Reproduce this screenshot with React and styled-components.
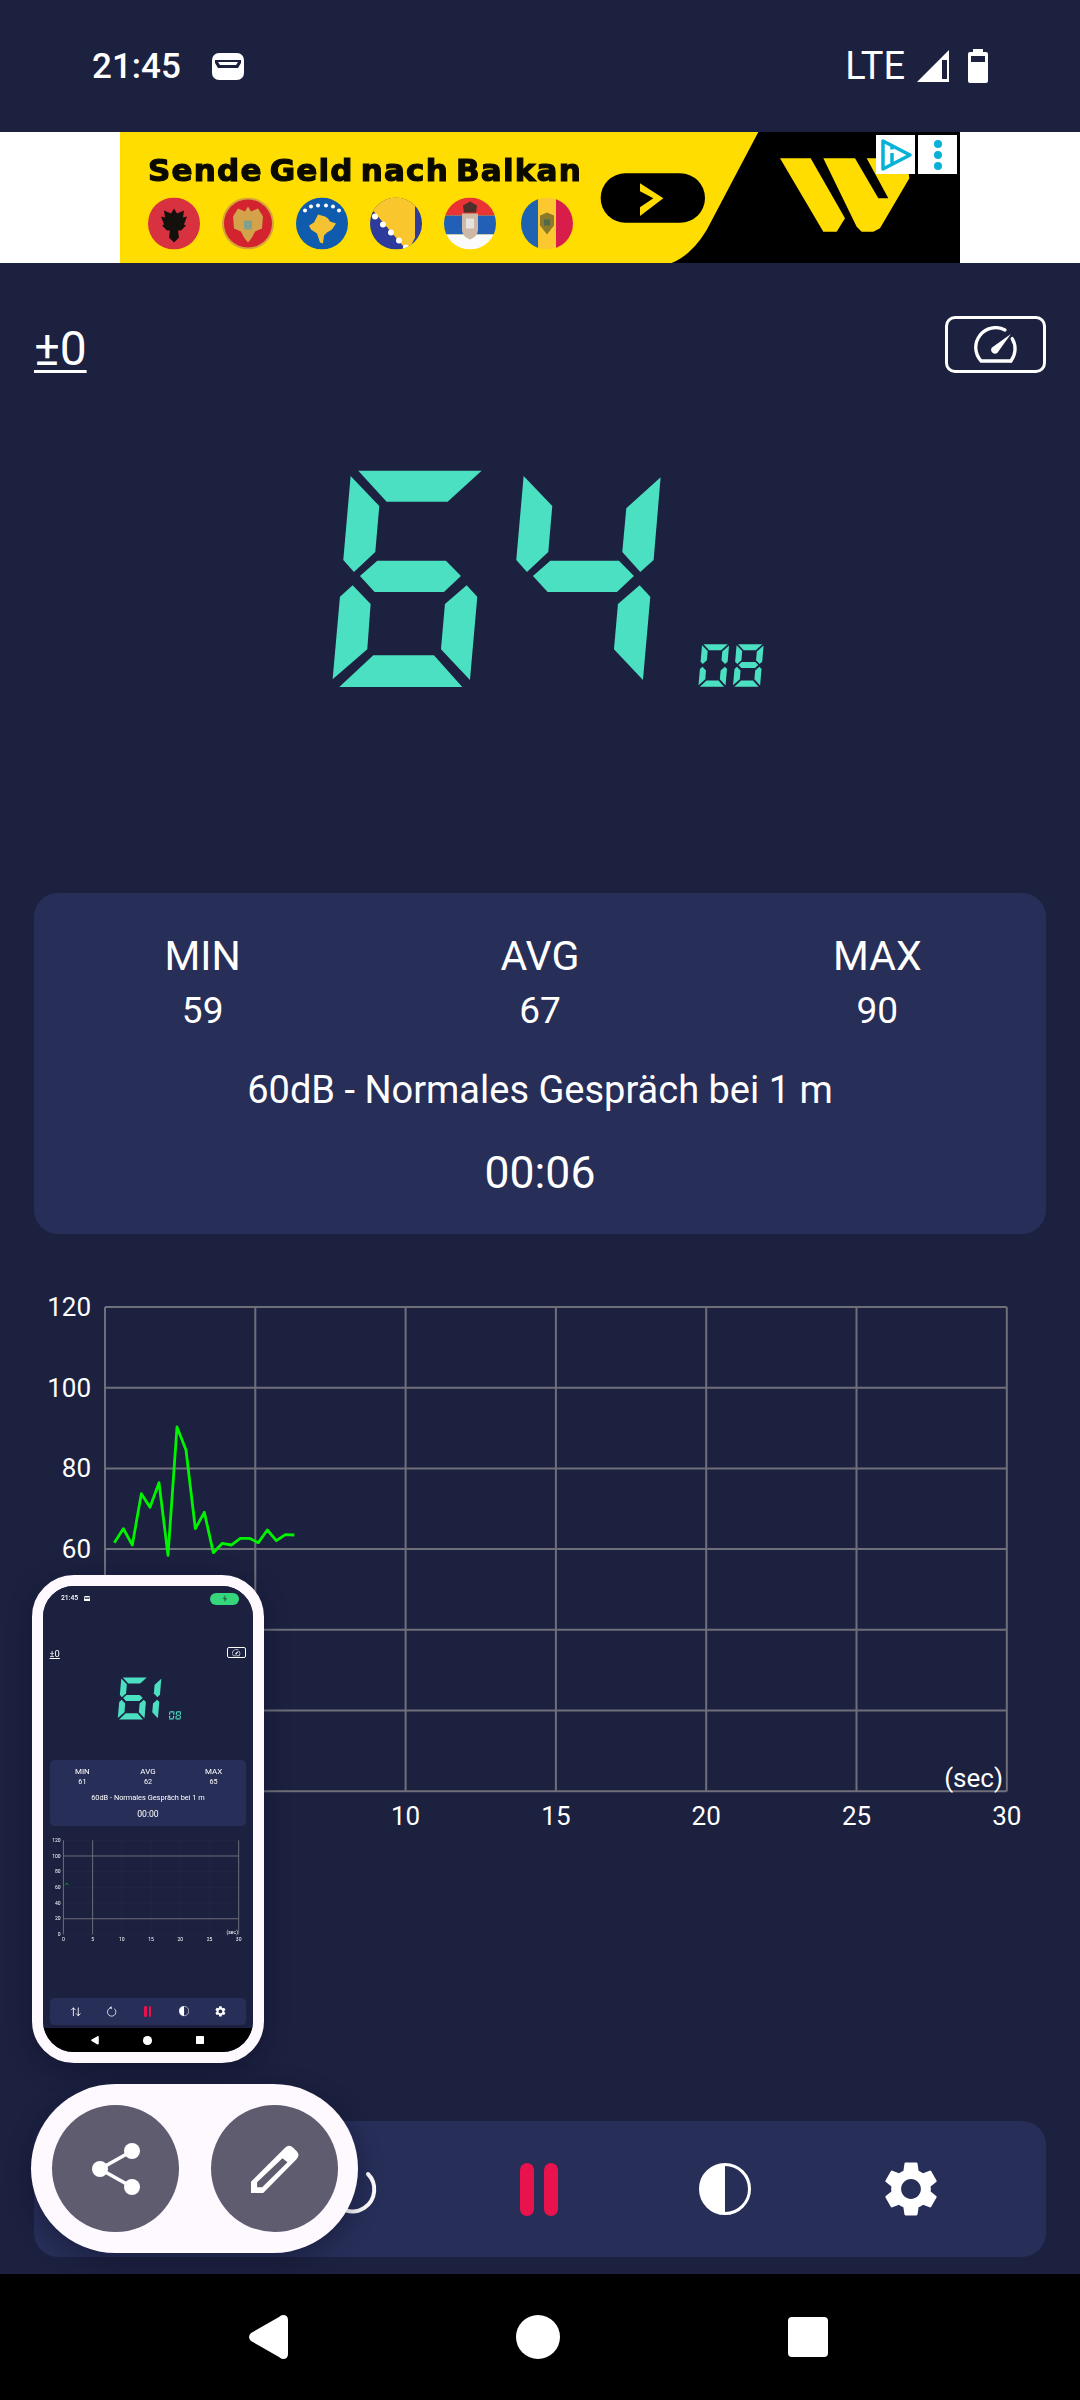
import React from 'react';
import styled, { createGlobalStyle } from 'styled-components';
import { ArrowUpDown } from 'lucide-react';
import { MdSettings } from 'react-icons/md';

const GlobalStyle = createGlobalStyle`
  html, body {
    margin: 0;
    padding: 0;
    background: #1c2140;
  }
  body {
    font-family: Roboto, "Liberation Sans", sans-serif;
    color: #fff;
  }
`;

const Page = styled.div`
  position: relative;
  width: 1080px;
  height: 2400px;
  overflow: hidden;
`;

const Screen = styled.div`
  display: flex;
  flex-direction: column;
  width: 1080px;
  height: 2400px;
  background: #1c2140;
  ${(p) => p.$mini && 'zoom: 0.1944;'}
`;

/* status bar */
const StatusBar = styled.div`
  display: flex;
  align-items: center;
  justify-content: space-between;
  flex: none;
  height: 132px;
  box-sizing: border-box;
  padding: 0 92px;
`;

const StatusGroup = styled.div`
  display: flex;
  align-items: center;
  gap: ${(p) => p.$gap}px;
`;

const Clock = styled.span`
  font-size: 35px;
  font-weight: 500;
  line-height: 1;
`;

const Carrier = styled.span`
  font-size: 38px;
  line-height: 1;
`;

const RecordingPill = styled.div`
  display: flex;
  align-items: center;
  justify-content: center;
  width: 148px;
  height: 62px;
  margin-right: -20px;
  border-radius: 31px;
  background: #35d67c;
`;

/* banner */
const AdSlot = styled.div`
  display: flex;
  justify-content: center;
  flex: none;
  height: 131px;
  background: ${(p) => (p.$empty ? 'transparent' : '#fff')};
`;

const AdBanner = styled.div`
  position: relative;
  display: flex;
  flex-direction: column;
  gap: 11px;
  width: 840px;
  box-sizing: border-box;
  padding: 22px 0 0 28px;
  background: #ffdd00;
  overflow: hidden;
`;

const AdArt = styled.svg`
  position: absolute;
  inset: 0;
  width: 840px;
  height: 131px;
  filter: blur(0.5px);
`;

const AdTitle = styled.div`
  font-family: "DejaVu Sans", sans-serif;
  font-size: 31px;
  font-weight: 700;
  line-height: 32px;
  letter-spacing: 1.2px;
  word-spacing: -5px;
  color: #0b0a00;
  -webkit-text-stroke: 1.2px #0b0a00;
  white-space: nowrap;
  filter: blur(0.6px);
`;

const FlagRow = styled.div`
  display: flex;
  gap: 22px;
  filter: blur(0.5px);

  & > :last-child {
    margin-left: 3px;
  }
`;

const AdChoices = styled.div`
  position: absolute;
  top: 3px;
  right: 3px;
  display: flex;
  gap: 3px;
`;

const AdChoiceBox = styled.div`
  display: flex;
  align-items: center;
  justify-content: center;
  width: 39px;
  height: 39px;
  background: #fff;
`;

/* top controls */
const TopRow = styled.div`
  display: flex;
  justify-content: space-between;
  align-items: flex-start;
  flex: none;
  margin: 53px 34px 0 34px;
`;

const Offset = styled.span`
  margin-top: 9px;
  font-size: 48px;
  line-height: 1;
  text-decoration: underline;
  text-decoration-thickness: 3px;
  text-underline-offset: 5px;
`;

const GaugeButton = styled.div`
  display: flex;
  align-items: center;
  justify-content: center;
  width: 101px;
  height: 57px;
  box-sizing: border-box;
  border: 3px solid #fff;
  border-radius: 10px;
`;

/* seven segment read-out */
const Meter = styled.div`
  display: flex;
  align-items: flex-end;
  justify-content: center;
  flex: none;
  height: 218px;
  margin-top: 97px;
  padding-left: 14px;
`;

const DigitRow = styled.div`
  display: flex;
  gap: ${(p) => p.$gap}px;
`;

const UnitRow = styled(DigitRow)`
  margin-left: 35px;
  margin-bottom: 1px;
`;

const Digit = styled.div`
  display: grid;
  width: ${(p) => (p.$h * 160) / 218}px;
  height: ${(p) => p.$h}px;
  ${(p) => p.$narrow && `margin-left: ${(-p.$h * 104) / 218}px;`}
`;

const Segment = styled.div`
  grid-area: 1 / 1;
  background: #4be0c1;
  clip-path: ${(p) => p.$shape};
`;

/* min / avg / max card */
const StatsCard = styled.div`
  flex: none;
  margin: 205px 34px 0 34px;
  height: 341px;
  box-sizing: border-box;
  padding-top: 40px;
  border-radius: 24px;
  background: #272e58;
  text-align: center;
`;

const StatsGrid = styled.div`
  display: grid;
  grid-template-columns: repeat(3, 1fr);
`;

const StatLabel = styled.div`
  font-size: 41px;
  line-height: 47px;
`;

const StatValue = styled.div`
  margin-top: 10px;
  font-size: 37px;
  line-height: 42px;
`;

const LevelHint = styled.div`
  margin-top: 37px;
  font-size: 38px;
  line-height: 42px;
`;

const Timer = styled.div`
  margin-top: 36px;
  font-size: 44.5px;
  line-height: 52px;
`;

/* chart */
const ChartSvg = styled.svg`
  display: block;
  flex: none;
  width: 1080px;
  height: 550px;
  margin-top: 56px;
`;

const AxisText = styled.text`
  font-family: Roboto, "Liberation Sans", sans-serif;
  font-size: 26px;
  fill: #fff;
`;

/* bottom toolbar */
const Toolbar = styled.div`
  display: flex;
  justify-content: center;
  align-items: center;
  flex: none;
  height: 136px;
  margin: auto 34px 17px 34px;
  padding-right: 3px;
  border-radius: 24px;
  background: #272e58;
`;

const ToolButton = styled.div`
  display: flex;
  align-items: center;
  justify-content: center;
  width: 186px;
  height: 80px;
`;

const PauseIcon = styled.div`
  display: flex;
  gap: 10px;
`;

const PauseBar = styled.div`
  width: 14px;
  height: 53px;
  border-radius: 7px;
  background: #e8134c;
`;

/* android navigation */
const NavBar = styled.div`
  display: flex;
  align-items: center;
  justify-content: center;
  gap: 228px;
  flex: none;
  height: 126px;
  background: #000;
  padding-right: 4px;
`;

const NavCircle = styled.div`
  width: 44px;
  height: 44px;
  border-radius: 50%;
  background: #fff;
`;

const NavSquare = styled.div`
  width: 40px;
  height: 40px;
  border-radius: 4px;
  background: #fff;
`;

/* floating recorder thumbnail + actions */
const Thumbnail = styled.div`
  position: absolute;
  left: 32px;
  top: 1575px;
  width: 210px;
  height: 466px;
  border: 11px solid #fef8ff;
  border-radius: 42px;
  overflow: hidden;
  box-shadow: 0 6px 24px rgba(8, 10, 30, 0.4);
`;

const ThumbnailInner = styled.div`
  filter: blur(0.35px);
`;

const ActionPill = styled.div`
  position: absolute;
  left: 31px;
  top: 2084px;
  display: flex;
  align-items: center;
  gap: 32px;
  width: 327px;
  height: 169px;
  box-sizing: border-box;
  padding-left: 21px;
  border-radius: 85px;
  background: #fef8ff;
  box-shadow: 0 6px 24px rgba(8, 10, 30, 0.4);
`;

const ActionButton = styled.div`
  display: flex;
  align-items: center;
  justify-content: center;
  width: 127px;
  height: 127px;
  border-radius: 50%;
  background: #5f5c70;
`;

// outlines of the seven segments, in a 480 x 654 cell
const SEGMENTS = {
  a: [[85, 2], [455, 2], [353, 95], [170, 95]],
  b: [[473, 22], [452, 270], [412, 306], [358, 246], [370, 115]],
  c: [[410, 346], [442, 380], [420, 630], [333, 538], [345, 402]],
  d: [[130, 556], [312, 556], [397, 651], [28, 651]],
  e: [[68, 346], [122, 402], [112, 538], [8, 628], [30, 380]],
  f: [[62, 18], [148, 108], [136, 246], [72, 306], [40, 270]],
  g: [[90, 318], [142, 272], [348, 272], [393, 318], [342, 366], [134, 366]],
};

const GLYPHS = {
  0: 'abcdef',
  1: 'bc',
  4: 'bcfg',
  6: 'acdefg',
  D: 'abcdef',
  B: 'abcdefg',
};

const shapeOf = (name) =>
  `polygon(${SEGMENTS[name]
    .map(([x, y]) => `${(x / 480) * 100}% ${(y / 654) * 100}%`)
    .join(', ')})`;

const SevenSegment = ({ value, height, gap }) => (
  <DigitRow $gap={gap} aria-label={value}>
    {value.split('').map((ch, i) => (
      <Digit key={i} $h={height} $narrow={ch === '1'}>
        {GLYPHS[ch].split('').map((s) => (
          <Segment key={s} $shape={shapeOf(s)} />
        ))}
      </Digit>
    ))}
  </DigitRow>
);

const Unit = ({ height, gap }) => (
  <UnitRow $gap={gap} aria-label="dB">
    {['D', 'B'].map((ch) => (
      <Digit key={ch} $h={height}>
        {GLYPHS[ch].split('').map((s) => (
          <Segment key={s} $shape={shapeOf(s)} />
        ))}
      </Digit>
    ))}
  </UnitRow>
);

const FlagSvg = ({ id, children }) => (
  <svg width="52" height="53" viewBox="0 0 52 52">
    <clipPath id={id}>
      <circle cx="26" cy="26" r="26" />
    </clipPath>
    <g clipPath={`url(#${id})`}>{children}</g>
  </svg>
);

const Flags = () => (
  <FlagRow>
    <FlagSvg id="fl-al">
      <rect width="52" height="52" fill="#d8313f" />
      <path d="M26 11l3 5 7-3-1 7 4-1-3 8 2 1-5 5-3 0 1 7-5 5-5-5 1-7-3 0-5-5 2-1-3-8 4 1-1-7 7 3z" fill="#14100c" />
    </FlagSvg>
    <FlagSvg id="fl-me">
      <rect width="52" height="52" fill="#d8a33a" />
      <circle cx="26" cy="26" r="24" fill="#d3232f" />
      <path d="M26 9l3 5 7-3 5 8-1 12-7 3-3 6-4 5-4-5-3-6-7-3-1-12 5-8 7 3z" fill="#d4a24a" />
      <rect x="22" y="23" width="8" height="9" rx="2" fill="#7ea28e" />
    </FlagSvg>
    <FlagSvg id="fl-xk">
      <rect width="52" height="52" fill="#0f5cae" />
      <path d="M22 17l7 2 3 2 2 3 6 2-4 6-5 3-3 3-1 8-3-1-3-9-6-4-2-4 5-3z" fill="#f4c233" />
      <g fill="#fff">
        <circle cx="9" cy="13" r="2" />
        <circle cx="15" cy="9" r="2" />
        <circle cx="22" cy="8" r="2" />
        <circle cx="30" cy="8" r="2" />
        <circle cx="37" cy="9" r="2" />
        <circle cx="43" cy="13" r="2" />
      </g>
    </FlagSvg>
    <FlagSvg id="fl-ba">
      <rect width="52" height="52" fill="#2c3b9c" />
      <path d="M6 0H45V40L39 52H36L2 12z" fill="#fac62e" />
      <g fill="#fff">
        <circle cx="5" cy="19" r="3" />
        <circle cx="13" cy="27" r="3" />
        <circle cx="21" cy="35" r="3" />
        <circle cx="29" cy="43" r="3" />
        <circle cx="36" cy="50" r="3" />
      </g>
    </FlagSvg>
    <FlagSvg id="fl-rs">
      <rect width="52" height="18" fill="#ea3335" />
      <rect y="18" width="52" height="19" fill="#2260b8" />
      <rect y="37" width="52" height="15" fill="#fbfbfb" />
      <path d="M19 8l7-4 7 4-1 7H20z" fill="#4a3028" />
      <path d="M18 16h16v16c0 6-5 9-8 10-3-1-8-4-8-10z" fill="#cdb9a6" />
      <rect x="22" y="21" width="8" height="10" fill="#e6e2e0" />
    </FlagSvg>
    <FlagSvg id="fl-md">
      <rect width="17" height="52" fill="#1d63b2" />
      <rect x="17" width="18" height="52" fill="#fbc92f" />
      <rect x="35" width="17" height="52" fill="#d91d4a" />
      <path d="M19 18l7-3 7 3v10l-7 9-7-9z" fill="#8c7a2c" />
      <rect x="23" y="22" width="6" height="6" fill="#4f6a4a" />
    </FlagSvg>
  </FlagRow>
);

const AdArtwork = () => (
  <AdArt viewBox="-1320 36 2520 393" preserveAspectRatio="none">
    <path d="M595 36L440 330Q395 405 335 429H1200V36Z" fill="#000" />
    <rect x="122" y="160" width="313" height="148" rx="74" fill="#000" />
    <polygon points="240,190 310,235 240,288 240,262 280,235 240,214" fill="#ffdd00" />
    <polygon points="660,115 752,115 855,295 830,335 790,335" fill="#ffdd00" />
    <polygon
      points="790,115 885,115 955,235 985,235 920,115 1040,115 1048,175 960,325 940,335 905,335 890,320"
      fill="#ffdd00"
    />
  </AdArt>
);

const StatusIcons = () => (
  <StatusGroup $gap={12}>
    <Carrier>LTE</Carrier>
    <svg width="32" height="32" viewBox="0 0 32 32">
      <path fillRule="evenodd" d="M0 32L32 0V32ZM25 10V29H30V10Z" fill="#fff" />
    </svg>
    <svg width="20" height="34" viewBox="0 0 20 34" style={{ marginLeft: 7 }}>
      <path
        fillRule="evenodd"
        d="M5 0H15V3H18A2 2 0 0 1 20 5V32A2 2 0 0 1 18 34H2A2 2 0 0 1 0 32V5A2 2 0 0 1 2 3H5ZM3 7V13H17V7Z"
        fill="#fff"
      />
    </svg>
  </StatusGroup>
);

const WalletIcon = () => (
  <svg width="32" height="27" viewBox="0 0 32 27">
    <rect width="32" height="27" rx="7" fill="#fff" />
    <path d="M3 7H29V10L26 15H6L3 10Z" fill="#1c2140" />
    <path d="M6 9H26L24 12H8Z" fill="#fff" />
  </svg>
);

const GaugeIcon = () => (
  <svg width="44" height="38" viewBox="130 62 130 115" fill="none" stroke="#fff" strokeWidth="10">
    <path d="M240 168H150A60 60 0 0 1 222 74" strokeLinecap="round" />
    <path d="M244 100A60 60 0 0 1 240 168" strokeLinecap="round" />
    <path d="M240 86L200 142A11 11 0 1 1 184 126Z" fill="#fff" stroke="none" />
  </svg>
);

const Y_TICKS = [120, 100, 80, 60, 40, 20, 0];
const X_TICKS = [0, 5, 10, 15, 20, 25, 30];
const TOP = 1307;
const LEFT = 105;
const ROW = 80.7;
const COL = 150.3;

// in the small preview only these grid lines survive the downscale
const MINI_ROWS = [1, 5];
const MINI_COLS = [0, 1, 6];

const MAIN_TRACE = [
  [283, 788], [310, 746], [337, 795], [364, 641], [390, 682], [417, 608], [444, 826],
  [471, 441], [498, 510], [526, 746], [553, 697], [580, 818], [607, 790], [634, 795],
  [661, 775], [688, 775], [715, 788], [742, 750], [769, 782], [796, 764], [823, 765],
].map(([x, y]) => [20 + x / 3, 1280 + y / 3]);

const MINI_TRACE = [[113, 1538], [118, 1530], [124, 1528], [132, 1538]];

const Chart = ({ trace, mini }) => (
  <ChartSvg viewBox="0 1290 1080 550">
    <g stroke="#6f6f7a" strokeWidth={mini ? 5 : 2}>
      {Y_TICKS.map((_, i) => (
        <line
          key={i}
          x1={LEFT}
          x2={LEFT + COL * 6}
          y1={TOP + ROW * i}
          y2={TOP + ROW * i}
          opacity={mini && !MINI_ROWS.includes(i) ? 0.06 : 1}
        />
      ))}
      {X_TICKS.map((_, i) => (
        <line
          key={i}
          x1={LEFT + COL * i}
          x2={LEFT + COL * i}
          y1={TOP}
          y2={TOP + ROW * 6}
          opacity={mini && !MINI_COLS.includes(i) ? 0.06 : 1}
        />
      ))}
    </g>
    {Y_TICKS.map((t, i) => (
      <AxisText key={t} x="91" y={TOP + ROW * i + 9} textAnchor="end">{t}</AxisText>
    ))}
    {X_TICKS.map((t, i) => (
      <AxisText key={t} x={LEFT + COL * i} y="1825" textAnchor="middle">{t}</AxisText>
    ))}
    <AxisText x="1003" y="1787" textAnchor="end">(sec)</AxisText>
    <polyline
      points={trace.map((p) => p.join(',')).join(' ')}
      fill="none"
      stroke="#00f400"
      strokeWidth="2.8"
      strokeLinejoin="round"
    />
  </ChartSvg>
);

const RefreshIcon = () => (
  <svg width="60" height="60" viewBox="0 0 60 60" fill="none">
    <path d="M45 15A22 22 0 1 1 24 9" stroke="#fff" strokeWidth="4" strokeLinecap="round" />
    <path d="M29 1V17L18 9Z" fill="#fff" />
  </svg>
);

const ContrastIcon = () => (
  <svg width="52" height="52" viewBox="0 0 52 52">
    <circle cx="26" cy="26" r="24.5" fill="none" stroke="#fff" strokeWidth="3" />
    <path d="M26 1A25 25 0 0 0 26 51Z" fill="#fff" />
  </svg>
);

const ShareIcon = () => (
  <svg width="56" height="60" viewBox="0 0 56 60">
    <path d="M44 12L12 30L44 48" fill="none" stroke="#fff" strokeWidth="3.5" />
    <circle cx="44" cy="12" r="8" fill="#fff" />
    <circle cx="12" cy="30" r="8" fill="#fff" />
    <circle cx="44" cy="48" r="8" fill="#fff" />
  </svg>
);

const PencilIcon = () => (
  <svg width="50" height="50" viewBox="570 100 146 148">
    <path
      fillRule="evenodd"
      d="M572 212L672 112Q684 100 696 110L708 122Q718 134 706 146L608 245H572ZM590 213V228H605L680 154L665 142Z"
      fill="#fff"
    />
  </svg>
);

const MeterScreen = ({ mini, reading, stats, time, trace }) => (
  <Screen $mini={mini}>
    <StatusBar>
      <StatusGroup $gap={31}>
        <Clock>21:45</Clock>
        <WalletIcon />
      </StatusGroup>
      {mini ? (
        <RecordingPill>
          <svg width="30" height="36" viewBox="0 0 30 36" fill="none" stroke="#17402c" strokeWidth="4">
            <path d="M15 3V33M5 16L25 22" />
          </svg>
        </RecordingPill>
      ) : (
        <StatusIcons />
      )}
    </StatusBar>

    <AdSlot $empty={mini}>
      {!mini && (
        <AdBanner>
          <AdArtwork />
          <AdTitle>Sende Geld nach Balkan</AdTitle>
          <Flags />
          <AdChoices>
            <AdChoiceBox>
              <svg width="36" height="36" viewBox="0 0 36 36" fill="none" stroke="#08b2d6" strokeWidth="3.5">
                <path d="M5 4V32L32 18Z" strokeLinejoin="round" />
                <path d="M14 16V26M14 10V12.5" />
              </svg>
            </AdChoiceBox>
            <AdChoiceBox>
              <svg width="12" height="36" viewBox="0 0 12 36" fill="#08b2d6">
                <circle cx="6" cy="7" r="4" />
                <circle cx="6" cy="18" r="4" />
                <circle cx="6" cy="29" r="4" />
              </svg>
            </AdChoiceBox>
          </AdChoices>
        </AdBanner>
      )}
    </AdSlot>

    <TopRow>
      <Offset>±0</Offset>
      <GaugeButton>
        <GaugeIcon />
      </GaugeButton>
    </TopRow>

    <Meter>
      <SevenSegment value={reading} height={218} gap={13} />
      <Unit height={43} gap={3} />
    </Meter>

    <StatsCard>
      <StatsGrid>
        {stats.map((s) => (
          <div key={s.label}>
            <StatLabel>{s.label}</StatLabel>
            <StatValue>{s.value}</StatValue>
          </div>
        ))}
      </StatsGrid>
      <LevelHint>60dB - Normales Gespräch bei 1 m</LevelHint>
      <Timer>{time}</Timer>
    </StatsCard>

    <Chart trace={trace} mini={mini} />

    <Toolbar>
      <ToolButton>
        <ArrowUpDown size={60} color="#fff" strokeWidth={1.8} />
      </ToolButton>
      <ToolButton>
        <RefreshIcon />
      </ToolButton>
      <ToolButton>
        <PauseIcon>
          <PauseBar />
          <PauseBar />
        </PauseIcon>
      </ToolButton>
      <ToolButton>
        <ContrastIcon />
      </ToolButton>
      <ToolButton>
        <MdSettings size={66} color="#fff" />
      </ToolButton>
    </Toolbar>

    <NavBar>
      <svg width="40" height="44" viewBox="0 0 40 44">
        <path d="M35 0Q40 0 40 5V39Q40 44 35 44Q33 44 31 42L3 26Q-1 22 3 18L31 2Q33 0 35 0Z" fill="#fff" />
      </svg>
      <NavCircle />
      <NavSquare />
    </NavBar>
  </Screen>
);

const MAIN_STATS = [
  { label: 'MIN', value: 59 },
  { label: 'AVG', value: 67 },
  { label: 'MAX', value: 90 },
];

const MINI_STATS = [
  { label: 'MIN', value: 61 },
  { label: 'AVG', value: 62 },
  { label: 'MAX', value: 65 },
];

const App = () => (
  <Page>
    <GlobalStyle />
    <MeterScreen reading="64" stats={MAIN_STATS} time="00:06" trace={MAIN_TRACE} />
    <Thumbnail>
      <ThumbnailInner>
        <MeterScreen mini reading="61" stats={MINI_STATS} time="00:00" trace={MINI_TRACE} />
      </ThumbnailInner>
    </Thumbnail>
    <ActionPill>
      <ActionButton>
        <ShareIcon />
      </ActionButton>
      <ActionButton>
        <PencilIcon />
      </ActionButton>
    </ActionPill>
  </Page>
);

export default App;
